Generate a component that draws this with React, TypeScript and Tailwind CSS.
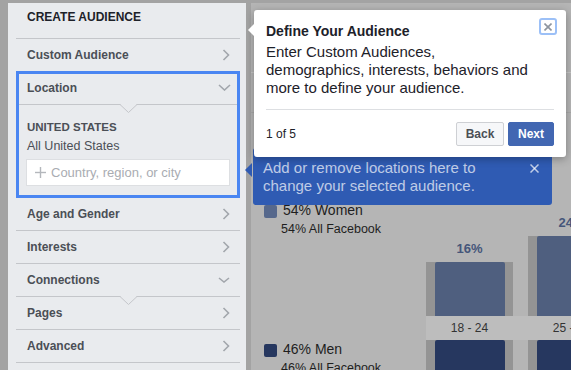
import type { ReactNode } from "react";

const LINE = "#c4c6ca";
const SIDE_BG = "#e9ebee";

function ChevronRight() {
  return (
    <svg width="8" height="12" viewBox="0 0 8 12" fill="none" stroke="#a2a6ac" strokeWidth="1.6">
      <polyline points="1.5,1 6.5,6 1.5,11" />
    </svg>
  );
}

function ChevronDown({ w = 13, h = 7 }: { w?: number; h?: number }) {
  return (
    <svg width={w} height={h} viewBox={`0 0 ${w} ${h}`} fill="none" stroke="#a2a6ac" strokeWidth="1.6">
      <polyline points={`1,1 ${w / 2},${h - 1} ${w - 1},1`} />
    </svg>
  );
}

function Cross({ size = 9, color = "#8d949e", width = 1.6 }: { size?: number; color?: string; width?: number }) {
  return (
    <svg width={size} height={size} viewBox={`0 0 ${size} ${size}`} stroke={color} strokeWidth={width}>
      <line x1="0.5" y1="0.5" x2={size - 0.5} y2={size - 0.5} />
      <line x1={size - 0.5} y1="0.5" x2="0.5" y2={size - 0.5} />
    </svg>
  );
}

// divider line, optionally with a small downward notch
function Divider({ notchLeft }: { notchLeft?: number }) {
  return (
    <div className="relative h-px bg-[#c4c6ca]">
      {notchLeft !== undefined && (
        <svg className="absolute top-0" style={{ left: notchLeft }} width="17" height="9" viewBox="0 0 17 9">
          <polygon points="0,0 8.5,8.5 17,0" fill={SIDE_BG} />
          <polyline points="0,0.5 8.5,8.5 17,0.5" fill="none" stroke={LINE} />
        </svg>
      )}
    </div>
  );
}

function Row({ label, down }: { label: string; down?: boolean }) {
  return (
    <div className="flex h-[32px] items-center justify-between pl-[11px] pr-[10px]">
      <span className="text-[12px] font-bold leading-[14px] text-[#4b4f56]">{label}</span>
      {down ? <ChevronDown w={12} h={6} /> : <ChevronRight />}
    </div>
  );
}

function Sidebar() {
  return (
    <div className="w-[238px] shrink-0 bg-[#e9ebee] pl-2 pr-[6px]">
      <div className="h-[35px] pl-[11px] pt-[7px] text-[12px] font-bold leading-[14px] text-[#1d2129]">
        CREATE AUDIENCE
      </div>
      <Divider />
      <Row label="Custom Audience" />

      <div className="h-[127px] border-[3px] border-[#4a86f2]">
        <div className="flex h-[30px] items-center justify-between pb-[3px] pl-[8px] pr-[6px]">
          <span className="text-[12px] font-bold leading-[14px] text-[#4b4f56]">Location</span>
          <ChevronDown />
        </div>
        <Divider notchLeft={101} />
        <div className="px-[7px] pt-[15px]">
          <div className="pl-px text-[11.5px] font-bold leading-[14px] text-[#4b4f56]">UNITED STATES</div>
          <div className="mt-[4px] pl-px text-[12.5px] leading-[16px] text-[#4b4f56]">All United States</div>
          <div className="mt-[5px] flex h-[27px] items-center gap-[5px] border border-[#dddfe2] bg-white pl-[8px]">
            <svg width="11" height="11" viewBox="0 0 11 11" stroke="#b4b7bc" strokeWidth="1.4">
              <line x1="5.5" y1="0" x2="5.5" y2="11" />
              <line x1="0" y1="5.5" x2="11" y2="5.5" />
            </svg>
            <span className="text-[13px] leading-[16px] text-[#a9acb2]">Country, region, or city</span>
          </div>
        </div>
      </div>

      <Row label="Age and Gender" />
      <Divider />
      <Row label="Interests" />
      <Divider />
      <Row label="Connections" down />
      <Divider notchLeft={104} />
      <Row label="Pages" />
      <Divider />
      <Row label="Advanced" />
      <Divider />
    </div>
  );
}

function LegendItem({ swatch, title, sub, className }: { swatch: string; title: string; sub: string; className?: string }) {
  return (
    <div className={className}>
      <div className="flex items-center gap-[6px]">
        <div className="mt-[3px] h-[13px] w-[13px] rounded-[2px]" style={{ background: swatch }} />
        <span className="text-[14px] leading-[18px] text-[#1e1e1e]">{title}</span>
      </div>
      <div className="mt-[2px] pl-[17px] text-[12.5px] leading-[16px] text-[#1e1e1e]">{sub}</div>
    </div>
  );
}

function Bar({ height, color, label }: { height?: number; color: string; label?: string }) {
  return (
    <div className="flex w-[87px] shrink-0 flex-col">
      {label && (
        <div className="mb-[5px] text-center text-[13px] font-bold leading-[16px] text-[#45567a]">{label}</div>
      )}
      <div className="flex flex-1 bg-[#949494] pl-[9px] pr-[8px]" style={height ? { height, flex: "none" } : undefined}>
        <div className="flex-1 rounded-t-[2px]" style={{ background: color }} />
      </div>
    </div>
  );
}

function Chart() {
  return (
    <div className="relative flex min-w-0 flex-1 bg-[#b5b5b5]">
      {/* table rows hidden behind the tour */}
      <div className="absolute left-0 right-0 top-[69px] h-px bg-[#c6c6c6]" />
      <div className="absolute left-0 right-0 top-[109px] h-px bg-[#a9a9a9]" />

      <div className="w-[175px] shrink-0 pl-[13px]">
        <LegendItem className="mt-[198px]" swatch="#56688c" title="54% Women" sub="54% All Facebook" />
        <LegendItem className="mt-[103px]" swatch="#26375f" title="46% Men" sub="46% All Facebook" />
      </div>

      <div className="flex flex-col">
        <div className="flex h-[313px] items-end gap-[15px]">
          <Bar height={54} color="#4f5f7f" label="16%" />
          <Bar height={80} color="#4f5f7f" label="24%" />
        </div>
        <div className="flex h-[24px] gap-[15px] bg-[#bdbdbd]">
          <div className="w-[87px] shrink-0 text-center text-[12px] leading-[24px] text-[#333]">18 - 24</div>
          <div className="w-[87px] shrink-0 text-center text-[12px] leading-[24px] text-[#333]">25 - 34</div>
        </div>
        <div className="flex flex-1 gap-[15px]">
          <Bar color="#26375f" />
          <Bar color="#26375f" />
        </div>
      </div>
    </div>
  );
}

function Arrow({ color, className }: { color: string; className: string }) {
  return (
    <svg className={`absolute ${className}`} width="7" height="14" viewBox="0 0 7 14">
      <polygon points="7,0 0,7 7,14" fill={color} />
    </svg>
  );
}

function TourPopover({ children }: { children?: ReactNode }) {
  return (
    <div className="absolute left-[254px] top-[10px] w-[312px] rounded-[3px] bg-white px-[12px] pb-[11px] pt-[12px] text-[#1d2129] shadow-[0_2px_8px_rgba(0,0,0,0.3)]">
      <Arrow color="#ffffff" className="left-[-6px] top-[13px]" />
      <div className="text-[14px] font-bold leading-[18px]">Define Your Audience</div>
      <div className="mt-[3px] text-[15px] leading-[18px]">
        Enter Custom Audiences,
        <br />
        demographics, interests, behaviors and
        <br />
        more to define your audience.
      </div>
      <div className="mt-[12px] h-px bg-[#dddfe2]" />
      <div className="mt-[12px] flex items-center justify-between">
        <span className="text-[12px] leading-[14px]">1 of 5</span>
        <div className="flex gap-[4px]">
          <button className="h-[24px] w-[48px] rounded-[2px] border border-[#ced0d4] bg-[#f6f7f9] text-[12px] font-bold text-[#4b4f56]">
            Back
          </button>
          <button className="h-[24px] w-[46px] rounded-[2px] border border-[#4267b2] bg-[#4267b2] text-[12px] font-bold text-white">
            Next
          </button>
        </div>
      </div>
      <div className="absolute right-[9px] top-[8px] flex h-[17px] w-[18px] items-center justify-center rounded-[3px] border-2 border-[#9cc0f7] bg-white">
        <Cross size={8} />
      </div>
      {children}
    </div>
  );
}

function LocationHint() {
  return (
    <div className="absolute left-[253px] top-[148px] h-[57px] w-[299px] rounded-[3px] bg-[#2f5bb3] pl-[10px] pt-[11px]">
      <Arrow color="#2f5bb3" className="left-[-8px] top-[15px]" />
      <div className="text-[15px] leading-[18px] text-white/70">
        Add or remove locations here to
        <br />
        change your selected audience.
      </div>
      <div className="absolute right-[13px] top-[16px]">
        <Cross size={9} color="rgba(255,255,255,0.7)" width={1.5} />
      </div>
    </div>
  );
}

export default function App() {
  return (
    <div className="relative flex h-[370px] w-[571px] overflow-hidden bg-[#a3a3a3] pl-2 pt-[3px] [font-family:'Liberation_Sans',Arial,sans-serif]">
      <Sidebar />
      <div className="w-[5px] shrink-0 bg-[#a3a3a3]" />
      <Chart />
      <LocationHint />
      <TourPopover />
    </div>
  );
}
